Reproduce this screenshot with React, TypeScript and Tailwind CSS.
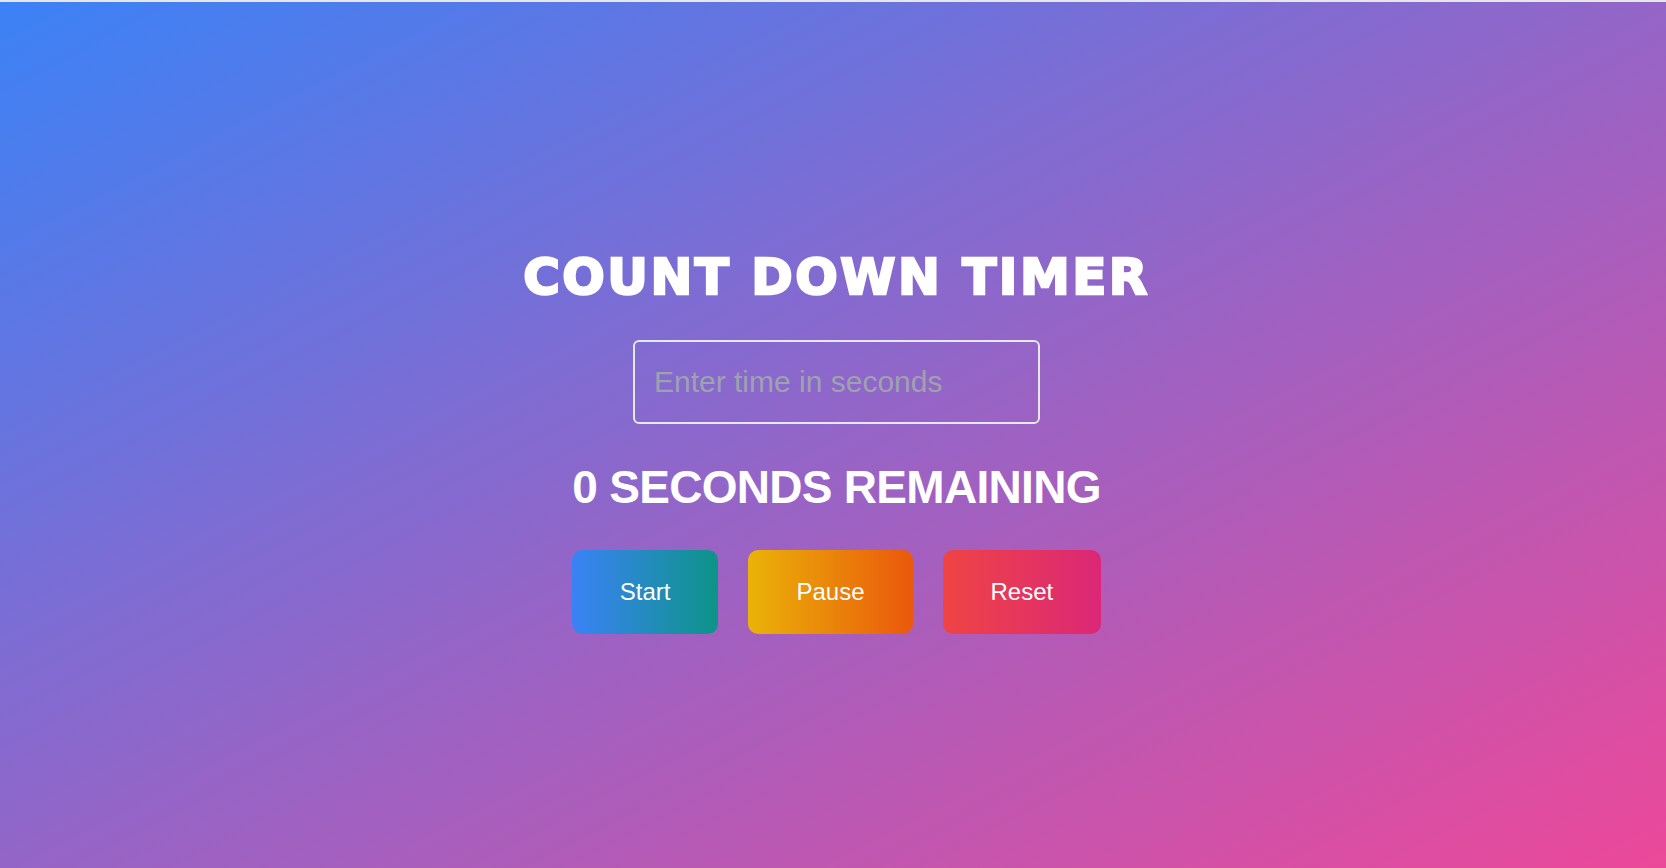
import * as React from "react";

const buttons = [
  { label: "Start", className: "bg-[linear-gradient(to_right,#3b82f6,#0d9488)]" },
  { label: "Pause", className: "bg-[linear-gradient(to_right,#eab308,#ea580c)]" },
  { label: "Reset", className: "bg-[linear-gradient(to_right,#ef4444,#db2777)]" },
];

export default function App() {
  const [seconds, setSeconds] = React.useState(0);
  const [value, setValue] = React.useState("");

  return (
    <div className="min-h-screen w-full bg-[#e6e6e6] pt-[2px] font-['Liberation_Sans',Arial,sans-serif]">
      <main className="flex min-h-[866px] w-full flex-col items-center bg-[linear-gradient(to_bottom_right,#3b82f6,#ec4899)] pl-[7px] pt-[250px]">
        {/* Title */}
        <h1 className="font-['DejaVu_Sans',sans-serif] text-[50px] font-bold leading-[51px] tracking-[2.5px] text-white [-webkit-text-stroke:2.4px_white]">
          COUNT DOWN TIMER
        </h1>

        <input
          type="number"
          value={value}
          onChange={(e) => setValue(e.target.value)}
          placeholder="Enter time in seconds"
          className="mt-[37px] h-[84px] w-[407px] rounded-md border-2 border-[#e5e7eb] bg-transparent px-[19px] text-[30px] leading-9 text-white outline-none placeholder:text-[#9ca3af]"
        />

        {/* Remaining */}
        <h2 className="mt-[40px] text-[46px] font-bold leading-[47px] tracking-[-0.7px] text-white">
          {seconds} SECONDS REMAINING
        </h2>

        <div className="mt-[39px] flex gap-[30px]">
          {buttons.map((b) => (
            <button
              key={b.label}
              onClick={() => {
                if (b.label === "Reset") {
                  setSeconds(0);
                  setValue("");
                }
              }}
              className={`h-[84px] rounded-[10px] px-12 text-2xl text-white ${b.className}`}
            >
              {b.label}
            </button>
          ))}
        </div>
      </main>
    </div>
  );
}
